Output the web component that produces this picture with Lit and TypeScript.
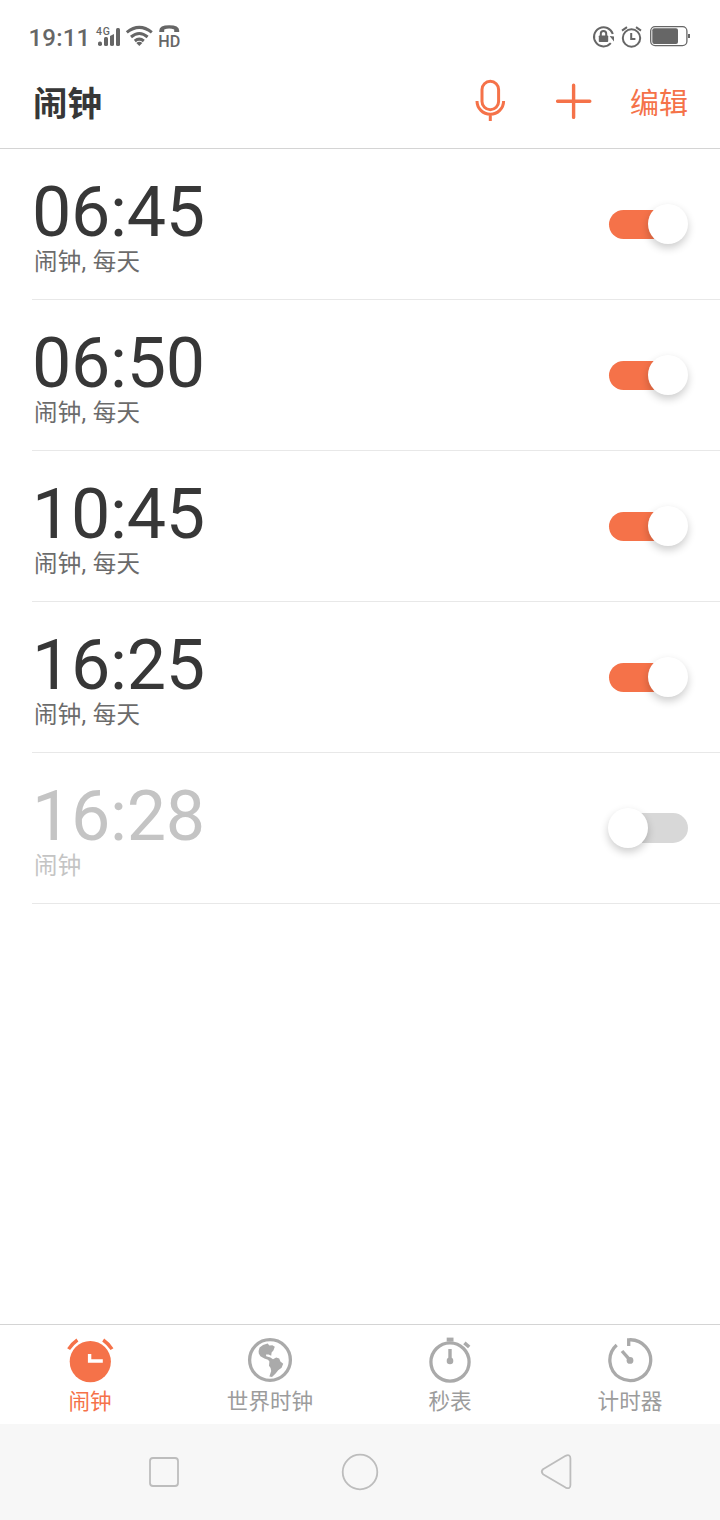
import { LitElement, html, css, svg } from "lit";
import { customElement, property } from "lit/decorators.js";
import { classMap } from "lit/directives/class-map.js";

interface Alarm {
  time: string;
  note: string;
  on: boolean;
}

const ALARMS: Alarm[] = [
  { time: "06:45", note: "闹钟, 每天", on: true },
  { time: "06:50", note: "闹钟, 每天", on: true },
  { time: "10:45", note: "闹钟, 每天", on: true },
  { time: "16:25", note: "闹钟, 每天", on: true },
  { time: "16:28", note: "闹钟", on: false },
];

const alarmIcon = svg`
  <circle cx="24.3" cy="27.6" r="20.6" fill="currentColor"/>
  <g fill="none" stroke="currentColor" stroke-width="3.4">
    <path d="M2.6 15.2Q6 9.8 11.4 6"/>
    <path d="M46 15.2Q42.6 9.8 37.2 6"/>
  </g>
  <path d="M23.6 20V27H36.8" fill="none" stroke="#fff" stroke-width="3.4"/>`;

const globeIcon = svg`
  <circle cx="24" cy="26" r="20.4" fill="none" stroke="currentColor" stroke-width="3.3"/>
  <path fill="currentColor" d="M12.6 17L13.6 13.6L17 11L21.6 9.6L23.4 11.6L26.4 11.2L28.8 12.8L27.4 16.4L25.6 18.4L25.2 21.8L22.6 20.4L20 20.4L20.2 22.2L24.4 23.4L27 25.2L30.2 23.6L33.2 24.6L34.4 27.4L37.2 29.8L35.6 33.8L32.2 36.2L29.6 39.4L26 43L23.4 42.4L25.2 37L24.6 34L23 31.8L23.4 27.4L22 25.8L18.4 24.4L14.4 22.2L12.8 19.6Z"/>`;

const stopwatchIcon = svg`
  <circle cx="24" cy="28" r="19.1" fill="none" stroke="currentColor" stroke-width="3.3"/>
  <rect x="20.7" y="3.6" width="6.8" height="4" fill="currentColor"/>
  <path d="M38.4 8.8L43.2 13" stroke="currentColor" stroke-width="3.6"/>
  <path d="M24 15V27" stroke="currentColor" stroke-width="3.4"/>
  <circle cx="24" cy="26.9" r="3.3" fill="currentColor"/>`;

const timerIcon = svg`
  <path d="M11.6 10.8A20.4 20.4 0 1 0 23.6 5.7V12" transform="translate(-0.9 0.1)" fill="none" stroke="currentColor" stroke-width="3.3"/>
  <path d="M16 17L24 26.2" stroke="currentColor" stroke-width="3.4"/>
  <circle cx="24" cy="26.4" r="3.4" fill="currentColor"/>`;

const TABS = [
  { label: "闹钟", icon: alarmIcon },
  { label: "世界时钟", icon: globeIcon },
  { label: "秒表", icon: stopwatchIcon },
  { label: "计时器", icon: timerIcon },
];

@customElement("toggle-switch")
class ToggleSwitch extends LitElement {
  @property({ type: Boolean }) on = false;

  static styles = css`
    :host { display: block; }
    .track {
      display: flex;
      align-items: center;
      width: 79px;
      height: 30px;
      border-radius: 15px;
      background: #d8d8d8;
    }
    .track.on { height: 29px; background: #f57249; justify-content: flex-end; }
    .thumb {
      flex: none;
      width: 40px;
      height: 40px;
      border-radius: 50%;
      background: #fff;
      margin-left: -1px;
      box-shadow: 0 4px 9px rgba(0, 0, 0, 0.2);
    }
    .track.on { width: 70px; margin-right: 9px; }
    .track.on .thumb { margin-right: -9px; }
  `;

  render() {
    return html`<div class=${classMap({ track: true, on: this.on })}><div class="thumb"></div></div>`;
  }
}

@customElement("status-bar")
class StatusBar extends LitElement {
  static styles = css`
    :host {
      display: flex;
      align-items: center;
      height: 72px;
      padding: 0 29px 0 28px;
      box-sizing: border-box;
      color: #666;
    }
    .clock {
      font-weight: 500;
      font-size: 24px;
      line-height: 28px;
      letter-spacing: 0.2px;
      width: 68px;
      box-sizing: border-box;
      padding: 3px 0 0 0.5px;
    }
    svg { display: block; flex: none; overflow: visible; }
    .group { display: flex; gap: 5px; }
    .right { margin-left: auto; }
    .small { font: 500 10.5px Roboto, sans-serif; }
    .hd { font: 500 17.4px Roboto, sans-serif; }
  `;

  render() {
    return html`
      <div class="clock">19:11</div>
      <div class="group">
        <svg width="25" height="24" viewBox="96 24 25 24" fill="currentColor">
          <text class="small" x="96" y="34.6" textLength="14">4G</text>
          <rect x="98" y="41.5" width="4" height="4.5" rx="1.8"/>
          <rect x="104" y="37" width="4" height="9" rx="1.5"/>
          <path d="M110 36L114 34V44.5Q114 46 112 46T110 44.5Z"/>
          <rect x="116" y="28" width="4" height="18" rx="1.5"/>
        </svg>
        <svg width="28" height="24" viewBox="126 24 28 24" fill="none" stroke="currentColor" stroke-width="3">
          <path d="M126.8 32.4Q139.3 22.4 151.8 32.4"/>
          <path d="M131 37Q139.3 30 147.6 37"/>
          <path d="M134.8 41Q139.3 37.2 143.8 41"/>
          <path d="M136.3 43Q139.3 40.6 142.3 43L139.3 46Z" fill="currentColor" stroke="none"/>
        </svg>
        <svg width="22" height="24" viewBox="159 24 22 24" fill="currentColor">
          <path d="M159.3 30.5Q159.3 25.2 169.2 25.2T179.2 30.5V32H174.2V29.5Q169.2 27.6 164.2 29.5V32H159.3Z"/>
          <text class="hd" x="158.2" y="47" textLength="22" lengthAdjust="spacingAndGlyphs">HD</text>
        </svg>
      </div>
      <div class="group right">
        <svg width="23" height="24" viewBox="593 24 23 24" fill="none" stroke="currentColor" stroke-width="2">
          <path d="M610.8 43.2A9.6 9.6 0 1 1 612.8 34"/>
          <path d="M609.6 36L614 36.4V41.4Z" fill="currentColor" stroke="none"/>
          <rect x="598.8" y="35.4" width="9.4" height="6.6" rx="0.8" fill="currentColor" stroke="none"/>
          <path d="M600.8 36V33.6A2.7 2.7 0 0 1 606.2 33.6V36"/>
        </svg>
        <svg width="23" height="24" viewBox="621 24 23 24" fill="none" stroke="currentColor" stroke-width="2">
          <circle cx="631.5" cy="38" r="8.7"/>
          <path d="M631.2 33V39H635.4M622 30.6L627 27.2M641 30.6L636 27.2"/>
        </svg>
        <svg width="42" height="24" viewBox="649 24 42 24">
          <rect x="650.7" y="26.6" width="36.2" height="19" rx="4.4" fill="none" stroke="currentColor" stroke-width="1.3"/>
          <rect x="652.3" y="28.2" width="25.7" height="15.8" rx="2" fill="currentColor"/>
          <rect x="688" y="34" width="2" height="4" fill="currentColor"/>
        </svg>
      </div>
    `;
  }
}

@customElement("app-root")
class AppRoot extends LitElement {
  static styles = css`
    :host {
      display: flex;
      flex-direction: column;
      height: 1520px;
      background: #fff;
      font-family: Roboto, "Noto Sans CJK SC", sans-serif;
    }
    svg { display: block; flex: none; }
    header {
      display: flex;
      align-items: center;
      height: 77px;
      box-sizing: border-box;
      border-bottom: 1px solid #d4d4d4;
      padding: 0 32px 18px 33px;
      color: #f57249;
    }
    h1 {
      margin: 0 auto 0 0;
      padding-top: 6px;
      font-size: 34.5px;
      line-height: 50px;
      font-weight: 700;
      color: #373737;
    }
    .mic { margin-right: 49px; }
    .plus { margin-right: 38px; }
    .edit { font-size: 29px; line-height: 40px; padding-top: 5px; }
    main { flex: 1; }
    .row {
      display: flex;
      align-items: center;
      justify-content: space-between;
      height: 151px;
      box-sizing: border-box;
      margin-left: 32px;
      padding-right: 32px;
      border-bottom: 1px solid #e8e8e8;
    }
    .texts { padding-top: 6px; }
    .time { font-size: 70px; line-height: 70px; letter-spacing: -0.3px; color: #373737; }
    .note { font-size: 23.5px; line-height: 30px; color: #6b6b6b; padding-left: 2px; letter-spacing: 0.3px; }
    .off .time, .off .note { color: #c4c4c4; }
    .tabs {
      display: grid;
      grid-template-columns: repeat(4, 1fr);
      height: 100px;
      box-sizing: border-box;
      border-top: 1px solid #d4d4d4;
    }
    .tab {
      display: flex;
      flex-direction: column;
      align-items: center;
      padding-top: 9px;
      font-size: 21.6px;
      line-height: 36px;
      color: #9c9c9c;
    }
    .tab svg { color: #aaa; }
    .tab.active, .tab.active svg { color: #f57249; }
    .system {
      display: grid;
      grid-template-columns: repeat(3, 196px);
      justify-content: center;
      justify-items: center;
      align-items: center;
      height: 96px;
      background: #f7f7f7;
    }
  `;

  render() {
    return html`
      <status-bar></status-bar>
      <header>
        <h1>闹钟</h1>
        <svg class="mic" width="32" height="44" viewBox="474 79 32 44" fill="none" stroke="currentColor" stroke-width="3">
          <rect x="482" y="81.3" width="16.6" height="28.4" rx="8.3"/>
          <path d="M477 101A13.3 13.3 0 0 0 503.6 101M490.3 115V121"/>
        </svg>
        <svg class="plus" width="37" height="44" viewBox="555 79 37 44" stroke="currentColor" stroke-width="3.4" stroke-linecap="round">
          <path d="M557.6 101.2H589.8M573.6 85.2V117.4"/>
        </svg>
        <div class="edit">编辑</div>
      </header>
      <main>
        ${ALARMS.map(
          (a) => html`<div class=${classMap({ row: true, off: !a.on })}>
            <div class="texts">
              <div class="time">${a.time}</div>
              <div class="note">${a.note}</div>
            </div>
            <toggle-switch ?on=${a.on}></toggle-switch>
          </div>`
        )}
      </main>
      <nav class="tabs">
        ${TABS.map(
          (t, i) => html`<div class=${classMap({ tab: true, active: i === 0 })}>
            <svg width="48" height="50" viewBox="0 0 48 50">${t.icon}</svg>
            <div>${t.label}</div>
          </div>`
        )}
      </nav>
      <div class="system">
        <svg width="40" height="40" viewBox="144 1452 40 40" fill="none" stroke="#bdbdbd" stroke-width="1.8">
          <rect x="150" y="1458" width="28" height="28" rx="3"/>
        </svg>
        <svg width="40" height="40" viewBox="340 1452 40 40" fill="none" stroke="#bdbdbd" stroke-width="1.8">
          <circle cx="360" cy="1472" r="17.3"/>
        </svg>
        <svg width="40" height="40" viewBox="536 1452 40 40" fill="none" stroke="#bdbdbd" stroke-width="1.8" stroke-linejoin="round">
          <path d="M543 1469.2L565.6 1455.8Q570.4 1453.8 570.4 1458.6V1485Q570.4 1489.6 565.6 1487.6L543 1474.2Q540.6 1471.7 543 1469.2Z"/>
        </svg>
      </div>
    `;
  }
}
